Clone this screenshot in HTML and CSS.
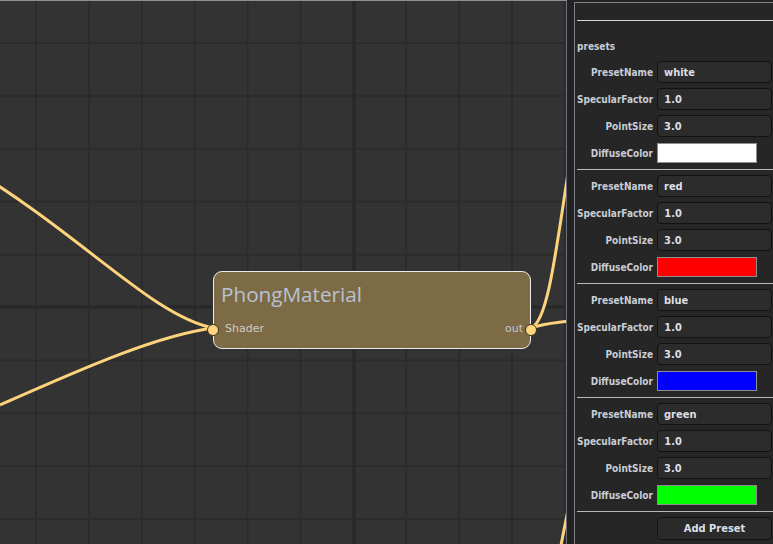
FILE: index.html
```html
<!DOCTYPE html>
<html>
<head>
<meta charset="utf-8">
<link rel="stylesheet" href="styles.css">
</head>
<body>
<div class="app">
  <div class="canvas">
    <svg class="wires" width="566" height="544" viewBox="0 0 566 544">
      <line x1="0" y1="307" x2="566" y2="307" class="major"/>
      <line x1="354" y1="0" x2="354" y2="544" class="major"/>
      <path d="M -40 162 C 80 232, 150 315, 213 328" class="wire"/>
      <path d="M 0 405 C 90 365, 160 335, 213 328" class="wire"/>
      <path d="M 531 328 C 548 322, 556 250, 570 160" class="wire"/>
      <path d="M 531 328 C 545 323, 556 323, 570 321" class="wire"/>
      <path d="M 560 550 C 563 535, 565 525, 569 505" class="wire"/>
    </svg>
    <div class="node">
      <div class="node-title">PhongMaterial</div>
      <div class="node-ports">
        <span class="port-in">Shader</span>
        <span class="port-out">out</span>
      </div>
      <span class="dot dot-in"></span>
      <span class="dot dot-out"></span>
    </div>
  </div>
  <div class="gap"></div>
  <div class="panel">
    <div class="rule"></div>
    <div class="section-label">presets</div>

    <div class="group">
      <div class="row"><label>PresetName</label><div class="field">white</div></div>
      <div class="row"><label>SpecularFactor</label><div class="field">1.0</div></div>
      <div class="row"><label>PointSize</label><div class="field">3.0</div></div>
      <div class="row"><label>DiffuseColor</label><div class="swatch" style="background:#ffffff"></div></div>
    </div>
    <div class="group">
      <div class="row"><label>PresetName</label><div class="field">red</div></div>
      <div class="row"><label>SpecularFactor</label><div class="field">1.0</div></div>
      <div class="row"><label>PointSize</label><div class="field">3.0</div></div>
      <div class="row"><label>DiffuseColor</label><div class="swatch" style="background:#ff0000"></div></div>
    </div>
    <div class="group">
      <div class="row"><label>PresetName</label><div class="field">blue</div></div>
      <div class="row"><label>SpecularFactor</label><div class="field">1.0</div></div>
      <div class="row"><label>PointSize</label><div class="field">3.0</div></div>
      <div class="row"><label>DiffuseColor</label><div class="swatch" style="background:#0000ff"></div></div>
    </div>
    <div class="group">
      <div class="row"><label>PresetName</label><div class="field">green</div></div>
      <div class="row"><label>SpecularFactor</label><div class="field">1.0</div></div>
      <div class="row"><label>PointSize</label><div class="field">3.0</div></div>
      <div class="row"><label>DiffuseColor</label><div class="swatch" style="background:#00ff00"></div></div>
    </div>
    <div class="row"><label></label><div class="button">Add Preset</div></div>
  </div>
</div>
</body>
</html>
```

FILE: styles.css
```css
html, body {
  margin: 0;
  padding: 0;
  background: #222222;
  overflow: hidden;
}
.app {
  display: flex;
  width: 773px;
  height: 544px;
  overflow: hidden;
}
.canvas {
  position: relative;
  height: 544px;
  box-sizing: border-box;
  border-top: 1px solid #8d9099;
  border-right: 1px solid #6f727a;
  width: 567px;
  flex: 0 0 567px;
  background-color: #333333;
  background-image:
    linear-gradient(to right, #2b2b2b 0, #2b2b2b 2px, transparent 2px),
    linear-gradient(to bottom, #2b2b2b 0, #2b2b2b 2px, transparent 2px);
  background-size: 52.9px 52.9px;
  background-position: 35px 41px;
  overflow: hidden;
}
.wires {
  position: absolute;
  left: 0;
  top: -1px;
}
.wires .major {
  stroke: #282828;
  stroke-width: 3;
}
.wires .wire {
  fill: none;
  stroke: #fdd37c;
  stroke-width: 3;
}
.node {
  position: absolute;
  left: 213px;
  top: 270px;
  width: 318px;
  height: 78px;
  box-sizing: border-box;
  border: 1.5px solid #ececec;
  border-radius: 9px;
  background: #7d6b45;
}
.node-title {
  font-family: "Open Sans", sans-serif;
  font-size: 20.7px;
  color: #b7c3d3;
  padding: 7px 0 0 7px;
  line-height: 30px;
}
.node-ports {
  display: flex;
  justify-content: space-between;
  padding: 13px 7px 0 11px;
  font-family: "DejaVu Sans", sans-serif;
  font-size: 11px;
  color: #cfcdc3;
  line-height: 14px;
}
.port-out {
  color: #c0c4cc;
}
.dot {
  position: absolute;
  width: 10px;
  height: 10px;
  border-radius: 50%;
  background: #ffd47e;
  border: 1px solid #3b3222;
  top: 52px;
}
.dot-in { left: -7px; }
.dot-out { right: -7px; }

.gap {
  flex: 0 0 7px;
  background: #222222;
}
.panel {
  flex: 1 0 auto;
  margin-top: 2px;
  border-top: 1px solid #7f828b;
  border-left: 1px solid #7f828b;
  background: #262626;
  padding: 17px 0 0 2px;
  font-family: "DejaVu Sans Condensed", "DejaVu Sans", sans-serif;
  font-stretch: condensed;
  font-weight: bold;
}
.rule {
  height: 1px;
  background: #d4d4d4;
}
.section-label {
  margin: 20px 0 8px 0;
  font-size: 10px;
  line-height: 12px;
  color: #c9cdd6;
  height: 12px;
}
.group {
  display: flex;
  flex-direction: column;
  gap: 5px;
  padding: 0 0 5px 0;
  border-bottom: 1px solid #b8b8b8;
  margin-bottom: 5px;
}
.row {
  display: flex;
  align-items: center;
  height: 22px;
}
.row label {
  flex: 0 0 76px;
  text-align: right;
  font-size: 10px;
  line-height: 12px;
  padding-top: 1px;
  color: #c9cdd6;
  padding-right: 4px;
}
.field, .button {
  flex: 0 0 115px;
  box-sizing: border-box;
  height: 22px;
  border: 1px solid #121212;
  border-radius: 4px;
  background: #2c2c2c;
  color: #dcdfe6;
  font-size: 11px;
  line-height: 21px;
  padding-left: 6px;
}
.swatch {
  flex: 0 0 100px;
  box-sizing: border-box;
  height: 20px;
  border: 1px solid #8f8f8f;
}
.button {
  height: 23px;
  margin-top: 1px;
  text-align: center;
  padding-left: 0;
  font-size: 11px;
  line-height: 22px;
  background: #2a2a2a;
}
```
